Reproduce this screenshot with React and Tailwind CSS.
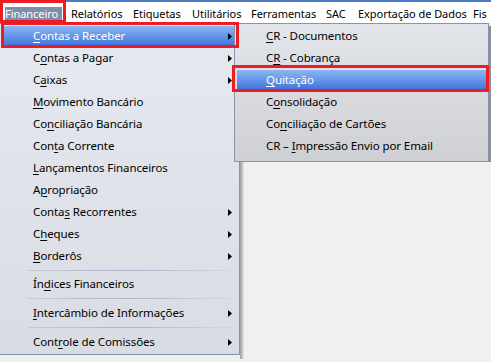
import React from "react";

const font = { fontFamily: '"Noto Sans", "Open Sans", sans-serif' };

function Label({ text, u }) {
  if (u === undefined || u < 0) return <span>{text}</span>;
  return (
    <span>
      {text.slice(0, u)}
      <span className="underline underline-offset-2 decoration-1">{text[u]}</span>
      {text.slice(u + 1)}
    </span>
  );
}

function Arrow() {
  return (
    <svg width="4" height="7" viewBox="0 0 4 7" className="shrink-0">
      <path d="M0 0 L4 3.5 L0 7 Z" fill="#000" />
    </svg>
  );
}

function Item({ text, u, arrow, active, pl = "pl-[31px]" }) {
  return (
    <div className="h-[22px] px-[2px] py-[1px]">
      <div
        className={`h-full flex items-center justify-between pr-[5px] ${pl} ${
          active ? "bg-gradient-to-b from-[#8cb6f2] via-[#6496e8] to-[#3f72da] text-white" : "text-black"
        }`}
      >
        <Label text={text} u={u} />
        {arrow && <Arrow />}
      </div>
    </div>
  );
}

function Sep({ h }) {
  return (
    <div className={`${h} flex items-center pl-[28px] pr-[6px]`}>
      <div className="h-[1px] w-full bg-gradient-to-r from-[#c5cbda] via-[#a9b3cc] to-[#d4d8e2]" />
    </div>
  );
}

const bar = [
  ["Relatórios", "w-[62px]"],
  ["Etiquetas", "w-[59px]"],
  ["Utilitários", "w-[59px]"],
  ["Ferramentas", "w-[75px]"],
  ["SAC", "w-[32px]"],
  ["Exportação de Dados", "w-[115px]"],
  ["Fis", "w-[23px]"],
];

export default function App() {
  return (
    <div
      className="relative w-[491px] h-[362px] overflow-hidden bg-[#f0f0f0] text-[11.5px] tracking-[-0.1px] leading-none"
      style={font}
    >
      {/* menu bar */}
      <div className="h-[23px] border-t-2 border-[#4a7bc4] bg-white flex items-center pt-[2px] whitespace-nowrap text-[11px] tracking-[-0.05px]">
        <div className="w-[66px] pl-[5px] shrink-0">
          <div className="bg-[#7f8dab] text-white w-[57px] h-[13px] flex items-center">Financeiro</div>
        </div>
        {bar.map(([b, w]) => (
          <div key={b} className={`${w} shrink-0 pl-[5px] text-black`}>
            {b}
          </div>
        ))}
      </div>

      {/* main dropdown */}
      <div className="absolute left-0 top-[23px] w-[244px] h-[336px] flex flex-col">
        <div className="flex flex-1">
          <div className="w-[240px] h-[332px] border border-l-0 border-[#8593b5] bg-gradient-to-b from-[#e6e9ef] to-[#d9dce2] pt-[1px] whitespace-nowrap">
            <Item text="Contas a Receber" u={0} arrow active />
            <Item text="Contas a Pagar" u={1} arrow />
            <Item text="Caixas" u={1} arrow />
            <Item text="Movimento Bancário" u={0} />
            <Item text="Conciliação Bancária" u={2} />
            <Item text="Conta Corrente" u={3} />
            <Item text="Lançamentos Financeiros" u={0} />
            <Item text="Apropriação" u={1} />
            <Item text="Contas Recorrentes" u={5} arrow />
            <Item text="Cheques" u={1} arrow />
            <Item text="Borderôs" u={0} arrow />
            <Sep h="h-[6px]" />
            <Item text="Índices Financeiros" u={2} />
            <Sep h="h-[7px]" />
            <Item text="Intercâmbio de Informações" u={0} arrow />
            <Sep h="h-[7px]" />
            <Item text="Controle de Comissões" u={4} arrow />
          </div>
          <div className="w-[4px] mt-[4px] h-[332px] bg-gradient-to-r from-[#9a9a9a] to-[#e8e8e8]" />
        </div>
        <div className="ml-[4px] w-[240px] h-[4px] bg-gradient-to-b from-[#9a9a9a] to-[#e8e8e8]" />
      </div>

      {/* submenu */}
      <div className="absolute left-[234px] top-[23px] w-[257px] h-[140px] flex">
        <div className="w-[255px] h-[139px] border border-[#8593b5] bg-gradient-to-b from-[#e2e5eb] to-[#cfd0d3] pt-[1px] whitespace-nowrap">
          <Item text="CR - Documentos" u={0} pl="pl-[29px]" />
          <Item text="CR - Cobrança" u={1} pl="pl-[29px]" />
          <Item text="Quitação" u={0} active pl="pl-[29px]" />
          <Item text="Consolidação" u={1} pl="pl-[29px]" />
          <Item text="Conciliação de Cartões" u={2} pl="pl-[29px]" />
          <Item text="CR – Impressão Envio por Email" u={5} pl="pl-[29px]" />
        </div>
        <div className="w-[2px] mt-[3px] h-[136px] bg-[#8d8d8d]" />
      </div>

      {/* red annotation boxes */}
      <div className="absolute left-0 top-0 w-[66px] h-[23px] border-[3px] border-[#ed1c24]" />
      <div className="absolute left-[1px] top-[22px] w-[238px] h-[26px] border-[3px] border-[#ed1c24]" />
      <div className="absolute left-[232px] top-[65px] w-[257px] h-[27px] border-[3px] border-[#ed1c24]" />
    </div>
  );
}
